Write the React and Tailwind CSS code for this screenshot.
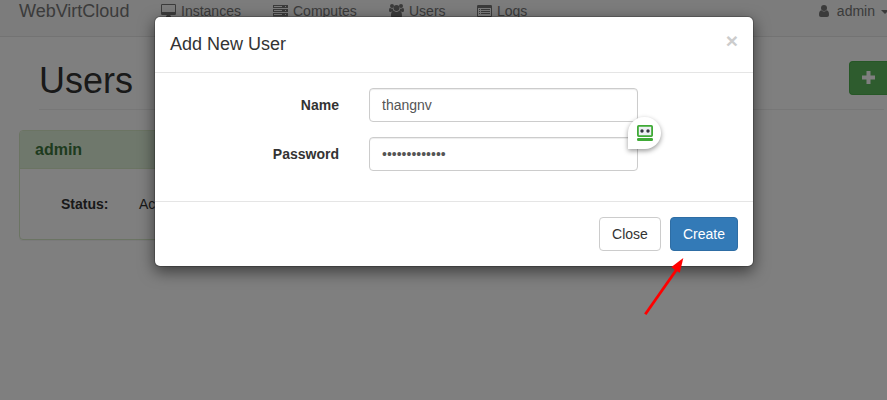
import React from "react";

function DesktopIcon() {
  return (
    <svg className="mt-[4px] h-[14px] w-[15px]" viewBox="0 0 15 14" fill="currentColor">
      <path fillRule="evenodd" d="M1.2 0h12.6A1.2 1.2 0 0 1 15 1.2v8.6a1.2 1.2 0 0 1-1.2 1.2H9.3c0 .8.7 1.2.7 1.7V13H5v-.3c0-.5.7-.9.7-1.7H1.2A1.2 1.2 0 0 1 0 9.8V1.2A1.2 1.2 0 0 1 1.2 0zM1 1.2v6.6c0 .2.1.2.2.2h12.6c.1 0 .2 0 .2-.2V1.2c0-.1-.1-.2-.2-.2H1.2c-.1 0-.2.1-.2.2z" />
    </svg>
  );
}

function ServerIcon() {
  return (
    <svg className="mt-[4px] h-[14px] w-[15px]" viewBox="0 0 15 14" fill="currentColor">
      {[1, 5, 9].map((y) => (
        <path key={y} fillRule="evenodd" d={`M0 ${y}h15v3H0zM1 ${y + 1}v1h8v-1zM12 ${y + 1}v1h1v-1z`} />
      ))}
      <path d="M0 12.6h15v.8H0z" />
    </svg>
  );
}

function UsersIcon() {
  return (
    <svg className="mt-[4px] h-[14px] w-[15px]" viewBox="0 0 15 14" fill="currentColor">
      <circle cx="3" cy="2" r="2" />
      <circle cx="12" cy="2" r="2" />
      <circle cx="7.5" cy="4" r="3" />
      <path d="M4.5 7C3.3 7 2.7 7.4 2.2 8H1.6C.7 8 0 7.6 0 6.7c0-.8 0-2.7 1-2.7.2 0 1 .7 2.1.7.4 0 .7-.1.9-.2-.1 1 .1 1.800.5 2.500z" />
      <path d="M10.500 7c1.200 0 1.800.4 2.300 1h.6c.9 0 1.600-.4 1.600-1.300 0-.8 0-2.700-1-2.700-.2 0-1 .7-2.100.7-.4 0-.7-.1-.9-.2.1 1-.1 1.800-.5 2.500z" />
      <path d="M4.600 6.800C2.400 6.800 2 9.500 2 11.800c0 1.300.8 2.200 2.100 2.200h6.800c1.300 0 2.100-.9 2.100-2.200 0-2.300-.4-5-2.600-5-.3 0-1.300 1.100-2.900 1.100S4.900 6.800 4.600 6.800z" />
    </svg>
  );
}

function ListIcon() {
  return (
    <svg className="mt-[4px] h-[14px] w-[15px]" viewBox="0 0 15 14" fill="currentColor">
      <path fillRule="evenodd" d="M1.2 1h12.6A1.2 1.2 0 0 1 15 2.2v9.6a1.2 1.2 0 0 1-1.2 1.2H1.2A1.2 1.2 0 0 1 0 11.8V2.2A1.2 1.2 0 0 1 1.2 1zM1 4v8h13V4z" />
      <path d="M2 5h1v1H2zM4 5h9v1H4zM2 7h1v1H2zM4 7h9v1H4zM2 9h1v1H2zM4 9h9v1H4z" />
    </svg>
  );
}

function UserIcon() {
  return (
    <svg className="mr-[8px] mt-[5px] h-[12px] w-[10px]" viewBox="0 0 10 12" fill="currentColor">
      <circle cx="5" cy="3" r="3" />
      <path d="M2.500 5.300C.5 5.500 0 7.600 0 9.700 0 11 .8 12 2 12h6c1.200 0 2-1 2-2.300 0-2.100-.5-4.200-2.500-4.400C6.800 6.100 6 6.500 5 6.500S3.200 6.100 2.500 5.300z" />
    </svg>
  );
}

function NavItem({ icon, label, className }) {
  return (
    <a className={`flex shrink-0 items-start gap-[5px] text-[14px] leading-[20px] ${className}`}>
      {icon}
      <span className="mt-px">{label}</span>
    </a>
  );
}

function Page() {
  return (
    <div className="h-full w-full bg-white">
      <nav className="flex h-[37px] items-start border-b border-[#e7e7e7] bg-[#f8f8f8] pl-[19px] text-[#777]">
        <span className="mt-px w-[142px] shrink-0 text-[18px] leading-[20px]">WebVirtCloud</span>
        <NavItem className="w-[112px]" icon={<DesktopIcon />} label="Instances" />
        <NavItem className="w-[116px]" icon={<ServerIcon />} label="Computes" />
        <NavItem className="w-[88px]" icon={<UsersIcon />} label="Users" />
        <NavItem className="w-[60px]" icon={<ListIcon />} label="Logs" />
        <a className="ml-auto flex items-start text-[14px] leading-[20px]">
          <UserIcon />
          <span className="mt-px">admin</span>
          <span className="ml-[6px] mt-[10px] w-[6px] overflow-hidden">
            <span className="block h-0 w-0 border-x-4 border-t-4 border-x-transparent border-t-[#777]" />
          </span>
        </a>
      </nav>
      <header className="ml-[39px] mr-[3px] flex h-[73px] items-start justify-between border-b border-[#eee]">
        <h1 className="mt-[24px] text-[36px] font-normal leading-[40px] text-[#333]">Users</h1>
        <button className="-mr-[3px] mt-[24px] flex h-[34px] w-[38px] shrink-0 items-center rounded-l border border-r-0 border-[#4cae4c] bg-[#5cb85c] pb-px pl-[12px]">
          <svg className="h-[13px] w-[13px]" viewBox="0 0 13 13" fill="#fff">
            <path d="M4.500 0h4v4.500H13v4H8.500V13h-4V8.500H0v-4h4.500z" />
          </svg>
        </button>
      </header>
      <section className="ml-[19px] mt-[20px] h-[110px] w-[270px] rounded border border-[#d6e9c6] shadow-[0_1px_1px_rgba(0,0,0,0.05)]">
        <h3 className="h-[38px] rounded-t-[3px] border-b border-[#d6e9c6] bg-[#dff0d8] px-[15px] pt-[10px] text-[16px] font-bold leading-[18px] text-[#3c763d]">
          admin
        </h3>
        <div className="flex pl-[41px] pt-[25px] text-[14px] leading-[20px] text-[#333]">
          <b className="w-[78px]">Status:</b>
          <span>Active</span>
        </div>
      </section>
    </div>
  );
}

function Field({ label, type, value }) {
  return (
    <label className="flex text-[14px] leading-[20px]">
      <span className="w-[184px] pt-[7px] text-right font-bold text-[#333]">{label}</span>
      <input
        type={type}
        defaultValue={value}
        className="ml-[30px] h-[34px] w-[269px] rounded border border-[#ccc] bg-white px-[12px] text-[#555] shadow-[inset_0_1px_1px_rgba(0,0,0,0.075)]"
      />
    </label>
  );
}

function Modal() {
  return (
    <div className="absolute left-[154px] top-[16px] w-[600px] rounded-[6px] border border-black/20 bg-white bg-clip-padding text-[#333] shadow-[0_5px_15px_rgba(0,0,0,0.5)]">
      <div className="flex h-[56px] items-start justify-between border-b border-[#e5e5e5] px-[15px] pt-[15px]">
        <h4 className="text-[18px] leading-[25px]">Add New User</h4>
        <span className="-mt-[2px] text-[21px] font-bold leading-[21px] text-[#ccc]">×</span>
      </div>
      <div className="flex flex-col gap-[15px] pb-[30px] pt-[15px]">
        <Field label="Name" type="text" value="thangnv" />
        <Field label="Password" type="password" value="passwordpassw" />
      </div>
      <div className="flex justify-end gap-[9px] border-t border-[#e5e5e5] p-[15px] text-[14px] leading-[20px]">
        <button className="h-[34px] w-[62px] rounded border border-[#ccc] bg-white">Close</button>
        <button className="h-[34px] w-[68px] rounded border border-[#2e6da4] bg-[#337ab7] text-white">Create</button>
      </div>
    </div>
  );
}

function AutofillBadge() {
  return (
    <div className="absolute left-[628px] top-[117px] flex h-[32px] w-[33px] items-center justify-center rounded-full rounded-bl-none bg-white shadow-[0_2px_5px_rgba(0,0,0,0.4)]">
      <svg className="h-[16px] w-[16px]" viewBox="0 0 16 16">
        <rect x="0.9" y="0.9" width="14.2" height="10.2" rx="0.8" fill="#eef0f4" stroke="#3faa36" strokeWidth="1.8" />
        <circle cx="5" cy="6" r="1.7" fill="#33363f" />
        <circle cx="11" cy="6" r="1.7" fill="#33363f" />
        <rect y="13" width="16" height="3" rx="1.3" fill="#3faa36" />
      </svg>
    </div>
  );
}

export default function App() {
  return (
    <div className="relative h-[400px] w-[887px] overflow-hidden font-['Liberation_Sans',Arial,sans-serif]">
      <Page />
      <div className="absolute inset-0 bg-black/50" />
      <Modal />
      <AutofillBadge />
      <svg className="absolute left-[640px] top-[255px] h-[64px] w-[48px]" viewBox="640 255 48 64">
        <path d="M645.3 314.3 677 269" stroke="#f00" strokeWidth="2.8" fill="none" />
        <path d="M683.3 258 671.4 267 675 270 679.8 272.800z" fill="#f00" />
      </svg>
    </div>
  );
}
